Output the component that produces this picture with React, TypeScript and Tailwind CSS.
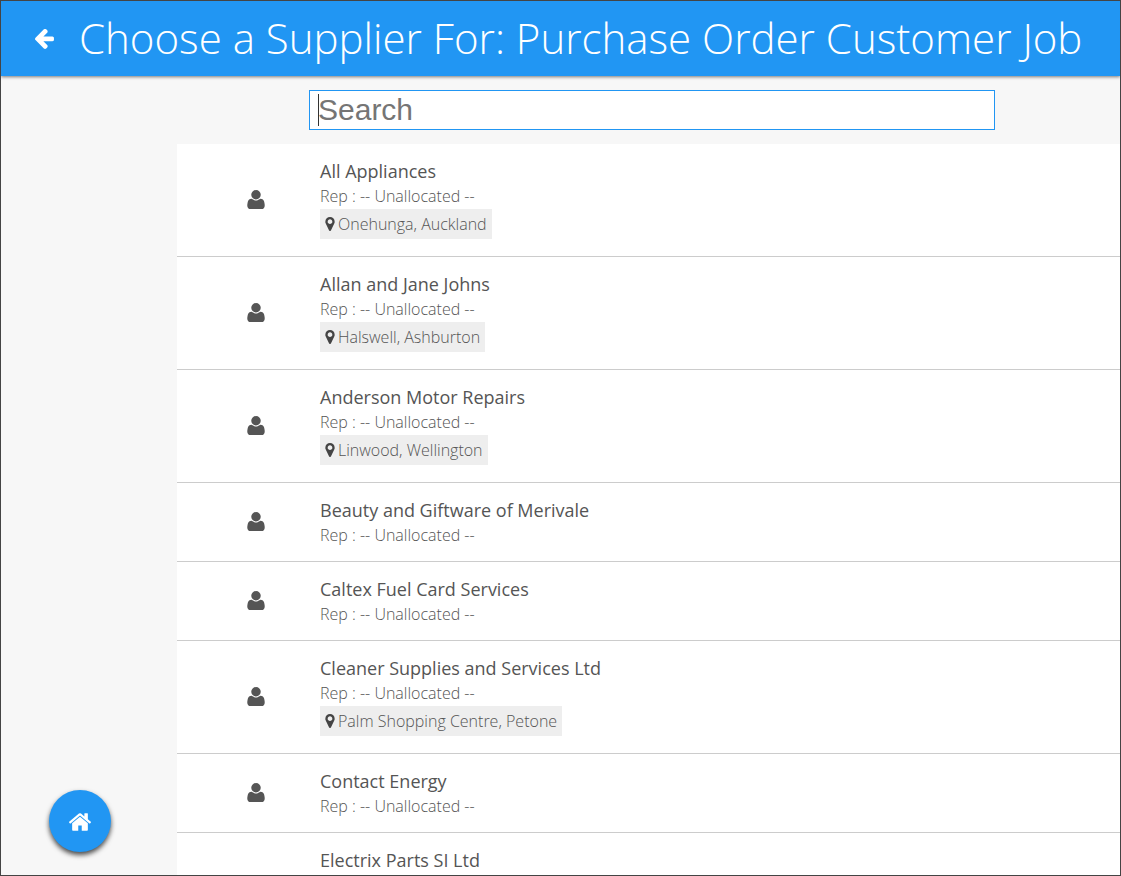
type Supplier = { name: string; rep?: string; location?: string };

const suppliers: Supplier[] = [
  { name: 'All Appliances', rep: '-- Unallocated --', location: 'Onehunga, Auckland' },
  { name: 'Allan and Jane Johns', rep: '-- Unallocated --', location: 'Halswell, Ashburton' },
  { name: 'Anderson Motor Repairs', rep: '-- Unallocated --', location: 'Linwood, Wellington' },
  { name: 'Beauty and Giftware of Merivale', rep: '-- Unallocated --' },
  { name: 'Caltex Fuel Card Services', rep: '-- Unallocated --' },
  { name: 'Cleaner Supplies and Services Ltd', rep: '-- Unallocated --', location: 'Palm Shopping Centre, Petone' },
  { name: 'Contact Energy', rep: '-- Unallocated --' },
  { name: 'Electrix Parts SI Ltd' },
];

function ArrowLeftIcon() {
  return (
    <svg viewBox="192 190 1472 1558" className="h-5 w-[19px] fill-current" aria-hidden="true">
      <path d="M1664 896v128q0 53-32.500 90.500t-84.500 37.500h-704l293 294q38 36 38 90t-38 90l-75 76q-37 37-90 37-52 0-91-37l-651-652q-37-37-37-90 0-52 37-91l651-650q38-38 91-38 52 0 90 38l75 74q38 38 38 91t-38 91l-293 293h704q52 0 84.500 37.500t32.500 90.500z" />
    </svg>
  );
}

function HomeIcon() {
  return (
    <svg viewBox="89 253 1614 1283" className="h-[18px] w-[22px] fill-current" aria-hidden="true">
      <path d="M1472 992v480q0 26-19 45t-45 19h-384v-384h-256v384h-384q-26 0-45-19t-19-45v-480q0-1 .5-3t.5-3l575-474 575 474q1 2 1 6zm223-69l-62 74q-8 9-21 11h-3q-13 0-21-7l-692-577-692 577q-12 8-24 7-13-2-21-11l-62-74q-8-10-7-23.500t11-21.500l719-599q32-26 76-26t76 26l244 204v-195q0-14 9-23t23-9h192q14 0 23 9t9 23v408l219 182q10 8 11 21.500t-7 23.500z" />
    </svg>
  );
}

function UserIcon() {
  return (
    <svg viewBox="192 128 1408 1536" className="h-[19px] w-[18px] fill-[#555]" aria-hidden="true">
      <path d="M1600 1405q0 120-73 189.500t-194 69.500h-874q-121 0-194-69.500t-73-189.500q0-53 3.500-103.500t14-109 26.500-108.500 43-97.500 62-81 85.500-53.500 111.500-20q9 0 42 21.500t74.500 48 108 48 133.500 21.500 133.500-21.500 108-48 74.500-48 42-21.500q61 0 111.500 20t85.500 53.500 62 81 43 97.500 26.500 108.500 14 109 3.500 103.500zm-320-893q0 159-112.500 271.500t-271.500 112.500-271.500-112.500-112.500-271.500 112.500-271.500 271.500-112.500 271.500 112.500 112.500 271.500z" />
    </svg>
  );
}

function PinIcon() {
  return (
    <svg viewBox="0 0 1024 1536" className="h-[14px] w-[10px] fill-[#444]" aria-hidden="true">
      <path d="M768 512q0-106-75-181t-181-75-181 75-75 181 75 181 181 75 181-75 75-181zM1024 512q0 109-33 179l-364 774q-16 33-47.500 52t-67.500 19-67.500-19-46.500-52l-365-774q-33-70-33-179 0-212 150-362t362-150 362 150 150 362z" />
    </svg>
  );
}

function SupplierRow({ name, rep, location }: Supplier) {
  return (
    <li className="flex items-center border-b border-[#ccc] bg-white last:min-h-28 last:items-start">
      <div className="flex w-[143px] shrink-0 justify-center pb-px pl-[14px]">{rep && <UserIcon />}</div>
      <div className="pt-[14px] pb-[13px]">
        <h2 className="text-lg leading-[26px] text-[#555]">{name}</h2>
        {rep && <p className="text-base leading-[25px] font-light text-[#555]">Rep : {rep}</p>}
        {location && (
          <span className="mb-1 flex h-[30px] w-fit items-center gap-[3px] bg-[#eee] px-[5px] text-base font-light text-[#555]">
            <PinIcon />
            {location}
          </span>
        )}
      </div>
    </li>
  );
}

export default function App() {
  return (
    <div className="flex h-screen flex-col overflow-hidden border border-[#444] bg-[#f7f7f7] font-['Open_Sans',sans-serif]">
      <header className="z-10 flex h-[75px] shrink-0 items-center bg-[#2196f3] pl-[34px] text-white shadow-[0_1px_3px_rgba(0,0,0,0.5)]">
        <button aria-label="Back" className="mr-[25px]">
          <ArrowLeftIcon />
        </button>
        <h1 className="pb-[2px] text-[42px] leading-[72px] font-light whitespace-nowrap">Choose a Supplier For: Purchase Order Customer Job</h1>
      </header>
      <main className="min-h-0 flex-1 overflow-hidden pt-[14px] pl-44">
        <div className="relative mb-[14px] ml-[132px] w-8/11">
          <input
            autoFocus
            type="text"
            aria-label="Search"
            placeholder="Search"
            className="peer block h-10 w-full border border-[#2196f3] bg-white px-2 pb-[2px] font-['Liberation_Sans',sans-serif] text-[30px] text-[#555] caret-transparent outline-none placeholder:text-[#757575] not-placeholder-shown:caret-[#333]"
          />
          <span className="pointer-events-none absolute top-1 left-[9px] hidden h-8 w-px bg-[#333] peer-placeholder-shown:block" />
        </div>
        <ul>
          {suppliers.map((supplier) => (
            <SupplierRow key={supplier.name} {...supplier} />
          ))}
        </ul>
      </main>
      <button
        aria-label="Home"
        className="fixed bottom-6 left-[49px] z-20 flex size-[62px] items-center justify-center rounded-full bg-[#2196f3] pt-px text-white shadow-[0_3px_5px_rgba(0,0,0,0.7)]"
      >
        <HomeIcon />
      </button>
    </div>
  );
}
